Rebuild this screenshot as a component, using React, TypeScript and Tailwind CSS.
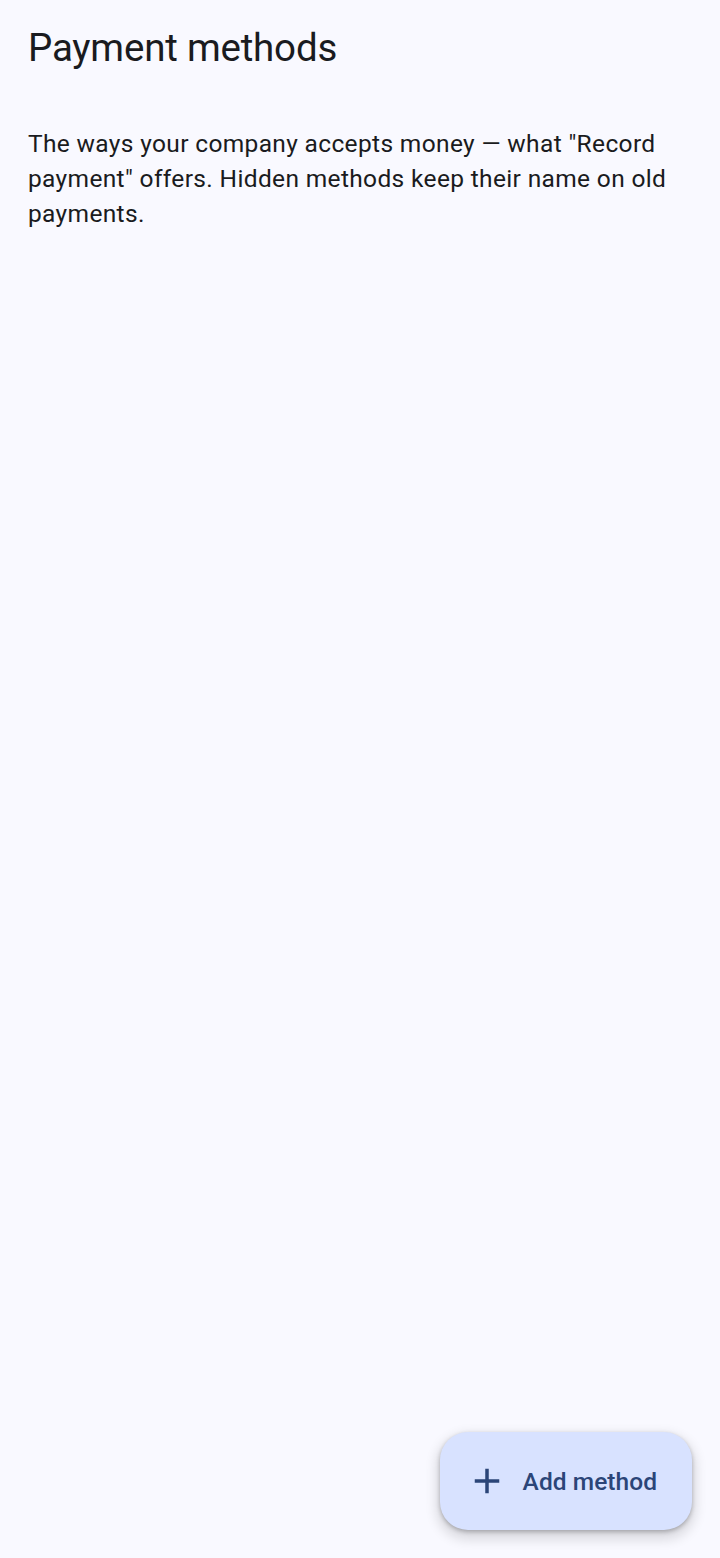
import React from "react";

export default function App() {
  return (
    <div
      className="relative w-[720px] h-[1558px] bg-[#f9f9ff] text-[#1a1b20] overflow-hidden"
      style={{ fontFamily: "Roboto, 'Noto Sans', sans-serif" }}
    >
      <header className="h-[112px] px-[28px] pt-[23px]">
        <h1 className="text-[38.5px] leading-[49px] font-normal tracking-[-0.2px]">Payment methods</h1>
      </header>
      <div className="px-[28px] pt-[14px]">
        <p className="text-[24.5px] leading-[35px] tracking-[0.35px]">
          The ways your company accepts money — what "Record payment" offers. Hidden methods keep their name on old payments.
        </p>
      </div>
      <button
        className="absolute right-[28px] bottom-[28px] h-[98px] pl-[26px] pr-[35px] rounded-[28px] bg-[#d8e2ff] text-[#2b4578] flex items-center gap-[15px] shadow-[0_2px_4px_rgba(0,0,0,0.25),0_6px_12px_4px_rgba(0,0,0,0.12)]"
      >
        <svg width="42" height="42" viewBox="0 0 24 24" fill="currentColor">
          <path d="M19 13h-6v6h-2v-6H5v-2h6V5h2v6h6v2z" />
        </svg>
        <span className="text-[24.5px] leading-[35px] font-medium tracking-[0.05px]">Add method</span>
      </button>
    </div>
  );
}
